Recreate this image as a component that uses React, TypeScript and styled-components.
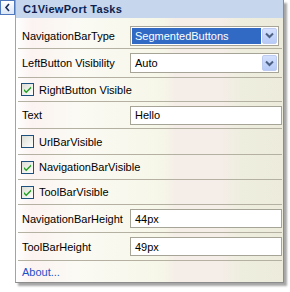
import React from 'react'
import styled, { createGlobalStyle } from 'styled-components'

const GlobalStyle = createGlobalStyle`
  html, body {
    margin: 0;
    padding: 0;
    background: #fff;
  }
  body {
    font-family: 'Liberation Sans', Arial, sans-serif;
    font-size: 11px;
  }
`

const Page = styled.div`
  display: flex;
  align-items: flex-start;
  width: 290px;
  height: 292px;
`

const BackButton = styled.div`
  box-sizing: border-box;
  width: 15px;
  height: 15px;
  border: 1px solid #4f78bd;
  background: linear-gradient(to bottom, #ffffff, #dbe6f7);
  display: flex;
  align-items: center;
  justify-content: center;
`

const Panel = styled.div`
  box-sizing: border-box;
  width: 269px;
  height: 283px;
  border-left: 1px solid #a3a3a3;
  border-right: 1px solid #8c8c8c;
  border-bottom: 1px solid #8c8c8c;
  box-shadow: 3px 3px 2px rgba(0, 0, 0, 0.35);
  background: linear-gradient(
    to right,
    #ffffff 0%,
    #fbf3f1 6%,
    #fbfaf4 22%,
    #f8f8ee 40%,
    #f6f6e8 55%,
    #f5ede8 60%,
    #f5ede8 77%,
    #eeeedf 84%,
    #ecebdc 100%
  );
  display: flex;
  flex-direction: column;
`

const Header = styled.div`
  height: 18px;
  background: #c6d6ed;
  color: #0d1f4f;
  font-weight: bold;
  font-size: 11px;
  letter-spacing: 0.3px;
  padding-left: 7px;
  display: flex;
  align-items: center;
`

const Rows = styled.div`
  display: flex;
  flex-direction: column;
  margin: 0 1px 0 2px;
`

const Row = styled.div<{ $h: number; $top?: number; $last?: boolean }>`
  box-sizing: border-box;
  height: ${p => p.$h}px;
  padding-top: ${p => p.$top || 0}px;
  border-bottom: ${p => (p.$last ? 'none' : '1px solid #b4b1a2')};
  display: flex;
  align-items: center;
  color: #000;
`

const Label = styled.span`
  width: 108px;
  padding-left: 4px;
  white-space: nowrap;
`

const Select = styled.div`
  box-sizing: border-box;
  width: 149px;
  height: 20px;
  border: 1px solid #a5a496;
  background: #fff;
  display: flex;
  align-items: center;
  padding: 1px;
`

const SelectValue = styled.div<{ $selected?: boolean }>`
  flex: 1;
  height: 100%;
  display: flex;
  align-items: center;
  padding-left: 3px;
  background: ${p => (p.$selected ? '#316ac5' : 'transparent')};
  color: ${p => (p.$selected ? '#fff' : '#000')};
`

const DropButton = styled.div`
  box-sizing: border-box;
  width: 15px;
  height: 16px;
  margin-left: 1px;
  border: 1px solid #bccbef;
  border-radius: 2px;
  background: linear-gradient(to bottom, #d4e0fd, #b7cbf7);
  display: flex;
  align-items: center;
  justify-content: center;
`

const TextBox = styled.div`
  box-sizing: border-box;
  width: 152px;
  height: 19px;
  border: 1px solid #a5a496;
  background: #fff;
  padding-left: 4px;
  display: flex;
  align-items: center;
  color: #000;
`

const CheckLabel = styled.label`
  display: flex;
  align-items: center;
  gap: 5px;
  padding-left: 3px;
  white-space: nowrap;
`

const Link = styled.span`
  padding-left: 4px;
  color: #1e50c8;
`

const Chevron = () => (
  <svg width="9" height="7" viewBox="0 0 9 7">
    <path d="M1 1.5 L4.5 5 L8 1.5" fill="none" stroke="#4d6185" strokeWidth="2" />
  </svg>
)

const Check = ({ checked }: { checked?: boolean }) => (
  <svg width="13" height="13" viewBox="0 0 13 13">
    <defs>
      <linearGradient id="cbg" x1="0" y1="0" x2="1" y2="1">
        <stop offset="0" stopColor="#dcdcd5" />
        <stop offset="1" stopColor="#ffffff" />
      </linearGradient>
    </defs>
    <rect x="0.5" y="0.5" width="12" height="12" fill="url(#cbg)" stroke="#1c5180" />
    {checked && (
      <path d="M3 6 L5.2 8.3 L10 3.6 L10 5.6 L5.2 10.3 L3 8 Z" fill="#21a121" />
    )}
  </svg>
)

const Back = () => (
  <svg width="7" height="9" viewBox="0 0 7 9">
    <path d="M5 1 L2 4.5 L5 8" fill="none" stroke="#1b2d5a" strokeWidth="1.6" />
  </svg>
)

export default function App() {
  return (
    <>
      <GlobalStyle />
      <Page>
        <BackButton>
          <Back />
        </BackButton>
        <Panel>
          <Header>C1ViewPort Tasks</Header>
          <Rows>
            <Row $h={31} $top={5}>
              <Label>NavigationBarType</Label>
              <Select>
                <SelectValue $selected>SegmentedButtons</SelectValue>
                <DropButton>
                  <Chevron />
                </DropButton>
              </Select>
            </Row>
            <Row $h={29}>
              <Label>LeftButton Visibility</Label>
              <Select>
                <SelectValue>Auto</SelectValue>
                <DropButton>
                  <Chevron />
                </DropButton>
              </Select>
            </Row>
            <Row $h={24}>
              <CheckLabel>
                <Check checked />
                RightButton Visible
              </CheckLabel>
            </Row>
            <Row $h={27}>
              <Label>Text</Label>
              <TextBox>Hello</TextBox>
            </Row>
            <Row $h={26}>
              <CheckLabel>
                <Check />
                UrlBarVisible
              </CheckLabel>
            </Row>
            <Row $h={25}>
              <CheckLabel>
                <Check checked />
                NavigationBarVisible
              </CheckLabel>
            </Row>
            <Row $h={25}>
              <CheckLabel>
                <Check checked />
                ToolBarVisible
              </CheckLabel>
            </Row>
            <Row $h={28}>
              <Label>NavigationBarHeight</Label>
              <TextBox>44px</TextBox>
            </Row>
            <Row $h={28}>
              <Label>ToolBarHeight</Label>
              <TextBox>49px</TextBox>
            </Row>
            <Row $h={21} $last>
              <Link>About...</Link>
            </Row>
          </Rows>
        </Panel>
      </Page>
    </>
  )
}
